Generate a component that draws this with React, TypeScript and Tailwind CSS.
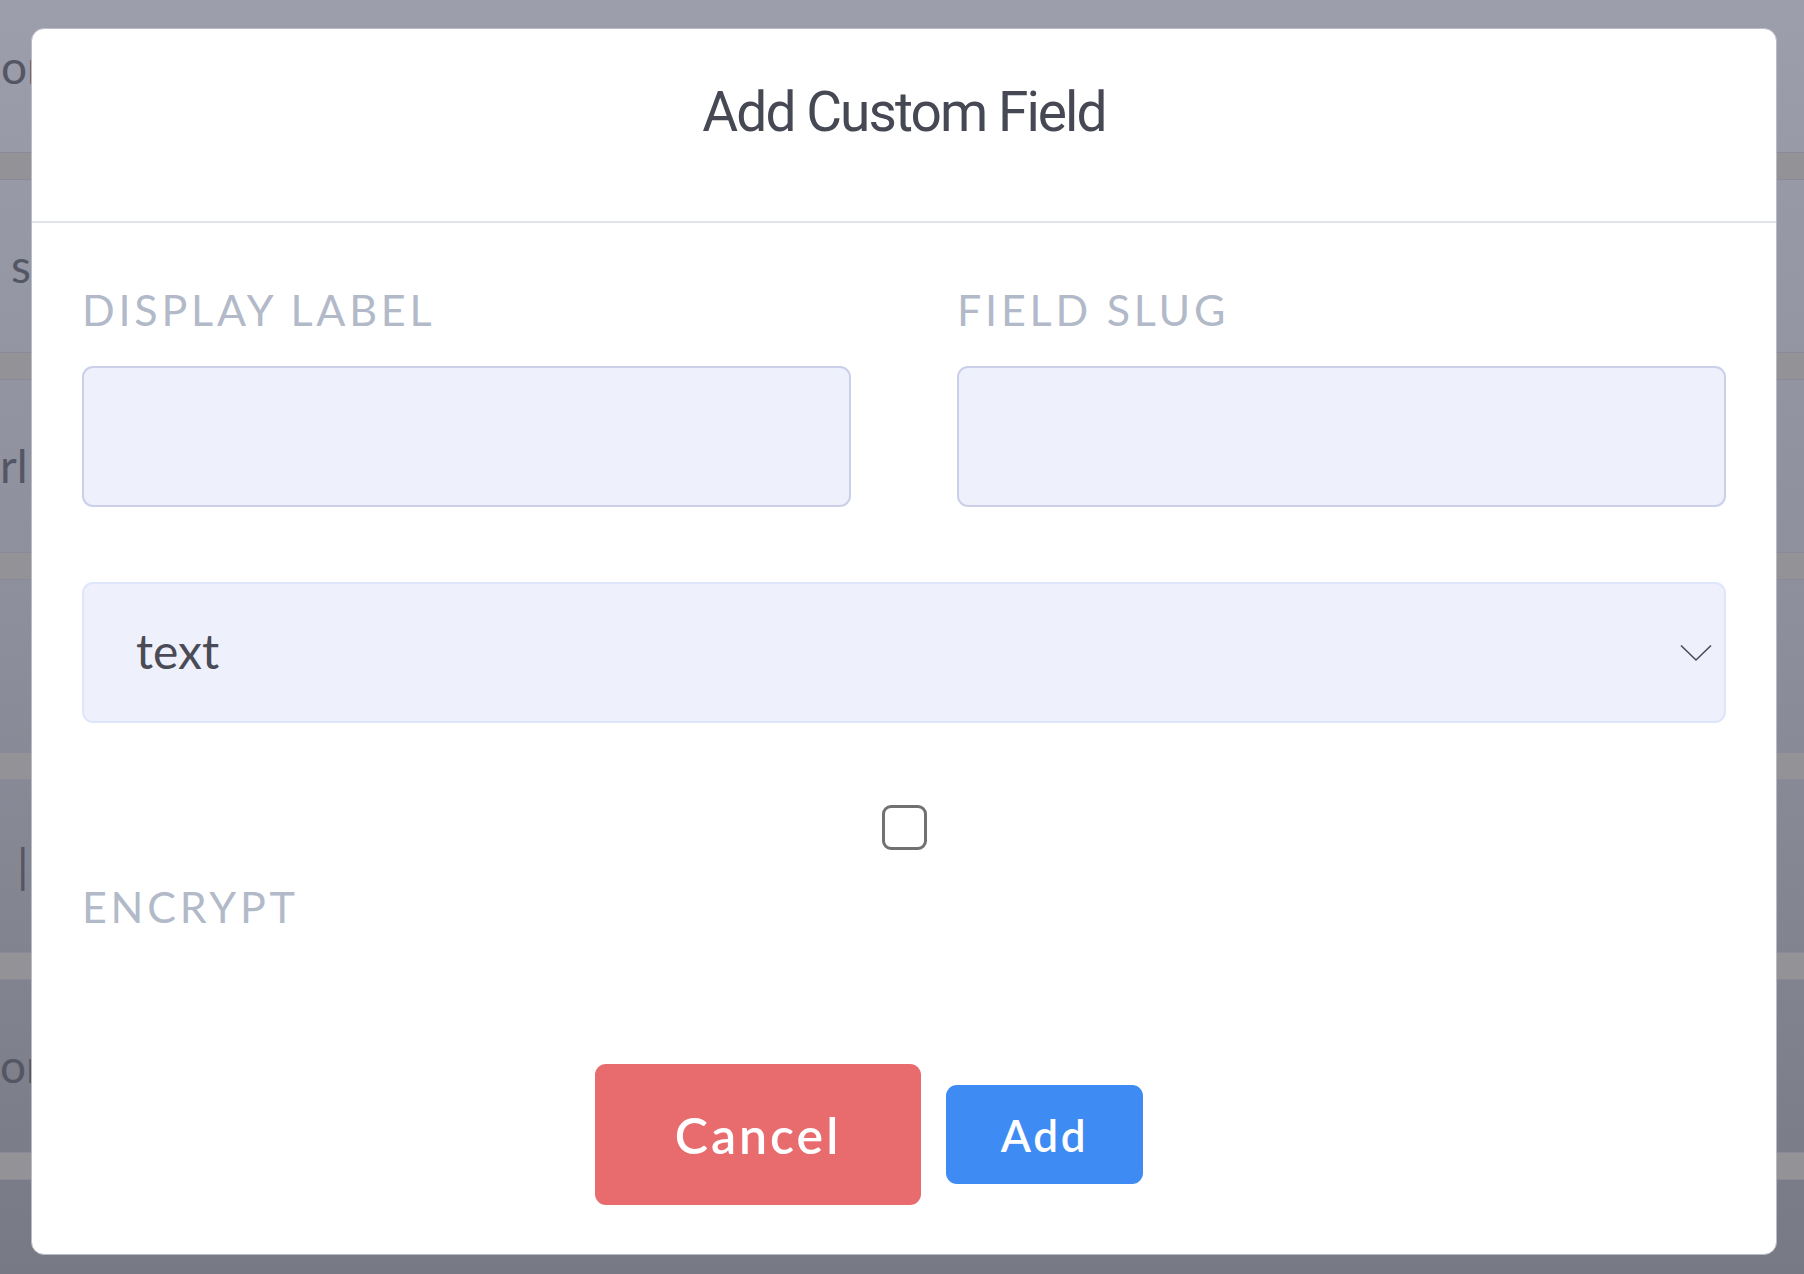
import React from "react";

const rows = [
  { text: "sa", pad: "pl-[11px]" },
  { text: "rl", pad: "pl-[0px]" },
  { text: "", pad: "pl-[0px]" },
  { text: "|", pad: "pl-[17px]" },
  { text: "om", pad: "pl-[0px]" },
  { text: "", pad: "pl-[0px]" },
];

export default function App() {
  return (
    <div className="relative w-[1804px] h-[1274px] overflow-hidden bg-gradient-to-b from-[#9c9eac] via-[#8c8e9b] to-[#777984]">
      {/* underlying page (dimmed) */}
      <div className="flex flex-col" style={{ fontFamily: "Lato, sans-serif" }}>
        <div className="h-[152px] flex items-start pt-[44px]">
          <span className="pl-[1px] whitespace-nowrap text-[46px] leading-none text-[#545664]">on</span>
        </div>
        {rows.map((r, i) => (
          <div key={i} className="h-[200px] flex flex-col">
            <div className="h-[28px] bg-[#939397] border-y border-[#888a99]" />
            <div className="h-[172px] flex items-center">
              <span className={`${r.pad} whitespace-nowrap text-[46px] leading-none text-[#545664]`}>{r.text}</span>
            </div>
          </div>
        ))}
      </div>

      {/* modal */}
      <div className="absolute left-[31px] top-[28px] w-[1746px] h-[1227px] bg-white rounded-[13px] border border-[#b9bbc5] flex flex-col">
        <div className="h-[194px] border-b-2 border-[#e1e4ea] flex justify-center pt-[56px] shrink-0">
          <h1
            className="text-[55px] leading-none text-[#464854] tracking-[-0.035em]"
            style={{ fontFamily: "Roboto, sans-serif" }}
          >
            Add Custom Field
          </h1>
        </div>

        <div className="flex flex-col px-[50px]" style={{ fontFamily: "Lato, sans-serif" }}>
          <div className="grid grid-cols-2 gap-x-[106px] mt-[65px]">
            <div className="flex flex-col">
              <label className="text-[43px] leading-none tracking-[0.088em] text-[#b2b9c8]">DISPLAY LABEL</label>
              <input className="mt-[35px] h-[141px] w-full rounded-[11px] border-2 border-[#cbd0e8] bg-[#eef1fc] outline-none" />
            </div>
            <div className="flex flex-col">
              <label className="text-[43px] leading-none tracking-[0.088em] text-[#b2b9c8]">FIELD SLUG</label>
              <input className="mt-[35px] h-[141px] w-full rounded-[11px] border-2 border-[#cbd0e8] bg-[#eef1fc] outline-none" />
            </div>
          </div>

          <div className="mt-[75px] h-[141px] rounded-[11px] border-2 border-[#dfe5fb] bg-[#eef1fc] flex items-center justify-between pl-[52px] pr-[12px]">
            <span className="text-[48px] leading-none text-[#4a4b55] pb-[4px]">text</span>
            <svg width="32" height="18" viewBox="0 0 32 18" fill="none">
              <path d="M1 1.5 L16 16 L31 1.5" stroke="#4a4b55" strokeWidth="1.6" />
            </svg>
          </div>

          <div className="mt-[82px] flex justify-center">
            <div className="w-[45px] h-[45px] rounded-[9px] border-[3px] border-[#717171] bg-white" />
          </div>

          <label className="mt-[35px] text-[43px] leading-none tracking-[0.088em] text-[#b2b9c8]">ENCRYPT</label>

          <div className="mt-[136px] flex justify-center items-center gap-[25px] pr-[70px]">
            <button className="w-[326px] h-[141px] rounded-[11px] bg-[#e86b6e] text-white text-[50px] font-semibold tracking-[0.06em] leading-none">
              Cancel
            </button>
            <button className="w-[197px] h-[99px] rounded-[11px] bg-[#3e8bf4] text-white text-[44px] font-semibold tracking-[0.06em] leading-none">
              Add
            </button>
          </div>
        </div>
      </div>
    </div>
  );
}
